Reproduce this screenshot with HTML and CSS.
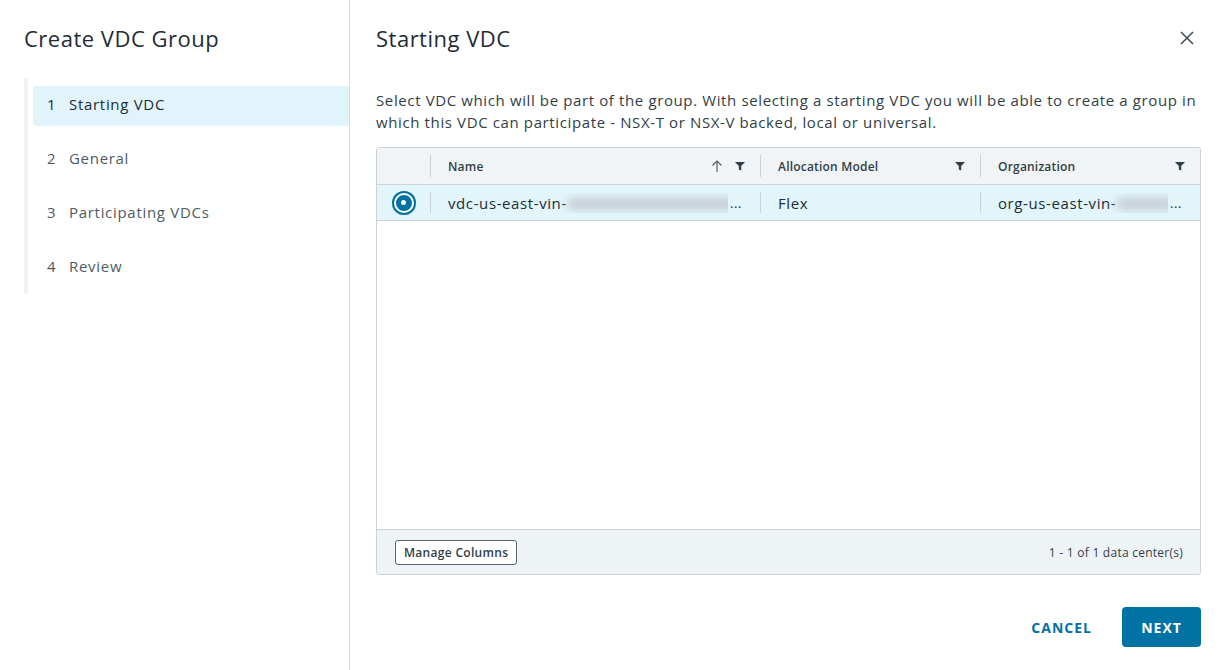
FILE: index.html
```html
<!DOCTYPE html>
<html lang="en">
  <head>
    <meta charset="UTF-8" />
    <meta name="viewport" content="width=device-width, initial-scale=1.0" />
    <title>Create VDC Group</title>
    <link rel="stylesheet" href="styles.css">
  </head>
  <body>
    <div class="wizard">
      <!-- Step list -->
      <aside class="wizard-nav">
        <h2 class="wizard-title">Create VDC Group</h2>
        <ul class="steps">
          <li class="step active"><span class="step-num">1</span>Starting VDC</li>
          <li class="step"><span class="step-num">2</span>General</li>
          <li class="step"><span class="step-num">3</span>Participating VDCs</li>
          <li class="step"><span class="step-num">4</span>Review</li>
        </ul>
      </aside>

      <!-- Current step -->
      <main class="wizard-body">
        <div class="body-head">
          <h3 class="page-title">Starting VDC</h3>
          <button class="close-btn" aria-label="Close">
            <svg width="16" height="16" viewBox="0 0 16 16">
              <path d="M2 2 L14 14 M14 2 L2 14" stroke="#3b4a54" stroke-width="1.5" fill="none" />
            </svg>
          </button>
        </div>

        <p class="intro">
          Select VDC which will be part of the group. With selecting a starting VDC you will be able to create a group in
          which this VDC can participate - NSX-T or NSX-V backed, local or universal.
        </p>

        <div class="grid">
          <div class="grid-head">
            <div class="cell cell-select"></div>
            <div class="cell cell-name">
              <span class="col-title">Name</span>
              <span class="col-icons">
                <svg class="sort-icon" width="12" height="14" viewBox="0 0 12 14">
                  <path d="M6 13 V2 M1.5 6.5 L6 2 L10.5 6.5" stroke="#56636c" stroke-width="1.2" fill="none" />
                </svg>
                <svg class="filter-icon" width="10" height="10" viewBox="0 0 10 10">
                  <path d="M0 1 H10 L6.2 5 V9.5 L3.8 8.5 V5 Z" fill="#313e46" />
                </svg>
              </span>
            </div>
            <div class="cell cell-alloc">
              <span class="col-title">Allocation Model</span>
              <span class="col-icons">
                <svg class="filter-icon" width="10" height="10" viewBox="0 0 10 10">
                  <path d="M0 1 H10 L6.2 5 V9.5 L3.8 8.5 V5 Z" fill="#313e46" />
                </svg>
              </span>
            </div>
            <div class="cell cell-org">
              <span class="col-title">Organization</span>
              <span class="col-icons">
                <svg class="filter-icon" width="10" height="10" viewBox="0 0 10 10">
                  <path d="M0 1 H10 L6.2 5 V9.5 L3.8 8.5 V5 Z" fill="#313e46" />
                </svg>
              </span>
            </div>
          </div>

          <div class="grid-rows">
            <div class="grid-row selected">
              <div class="cell cell-select">
                <span class="radio"><span class="radio-dot"></span></span>
              </div>
              <div class="cell cell-name">
                <span class="truncate">vdc-us-east-vin-<span class="redacted wide"></span></span>
                <span class="ellipsis">...</span>
              </div>
              <div class="cell cell-alloc">Flex</div>
              <div class="cell cell-org">
                <span class="truncate">org-us-east-vin-<span class="redacted short"></span></span>
                <span class="ellipsis">...</span>
              </div>
            </div>
          </div>

          <div class="grid-foot">
            <button class="btn-outline">Manage Columns</button>
            <span class="count">1 - 1 of 1 data center(s)</span>
          </div>
        </div>

        <div class="actions">
          <button class="btn-link">CANCEL</button>
          <button class="btn-primary">NEXT</button>
        </div>
      </main>
    </div>
  </body>
</html>
```

FILE: styles.css
```css
body {
  margin: 0;
  padding: 0;
  background-color: #ffffff;
  color: #313e46;
  font-family: "Open Sans", Lato, sans-serif;
}

.wizard {
  display: flex;
  height: 670px;
}

/* left column */
.wizard-nav {
  width: 350px;
  flex-shrink: 0;
  border-right: 1px solid #d7dcdf;
  padding-left: 24px;
  box-sizing: border-box;
}

.wizard-title {
  margin: 23px 0 0;
  font-size: 22px;
  font-weight: 400;
  line-height: 30px;
  letter-spacing: 0.5px;
  color: #1f2c34;
}

.steps {
  list-style: none;
  margin: 25px 0 0;
  padding: 8px 0 0 5px;
  border-left: 4px solid #eef2f5;
  height: 207px;
}

.step {
  display: flex;
  align-items: center;
  height: 40px;
  margin-bottom: 14px;
  padding: 0 0 4px 14px;
  box-sizing: border-box;
  font-size: 15px;
  letter-spacing: 0.7px;
  color: #4d5b63;
  border-radius: 4px 0 0 4px;
}

.step.active {
  background-color: #e1f4fb;
  color: #1f2c34;
}

.step-num {
  width: 22px;
}

/* right column */
.wizard-body {
  flex: 1;
  min-width: 0;
  padding: 23px 24px 0 26px;
  display: flex;
  flex-direction: column;
}

.body-head {
  display: flex;
  justify-content: space-between;
  align-items: center;
  height: 30px;
}

.page-title {
  margin: 0;
  font-size: 22px;
  font-weight: 400;
  letter-spacing: 0.5px;
  color: #1f2c34;
}

.close-btn {
  background: none;
  border: none;
  padding: 0;
  margin-right: 6px;
  display: flex;
  cursor: pointer;
}

.intro {
  margin: 36px 0 0;
  font-size: 15px;
  line-height: 22px;
  letter-spacing: 0.62px;
  color: #313e46;
}

/* datagrid */
.grid {
  margin-top: 14px;
  border: 1px solid #ccd3d8;
  border-radius: 3px;
  height: 428px;
  box-sizing: border-box;
  display: flex;
  flex-direction: column;
  overflow: hidden;
}

.grid-head,
.grid-row {
  display: flex;
}

.grid-head {
  background-color: #f1f4f6;
  border-bottom: 1px solid #ccd3d8;
  height: 37px;
  box-sizing: border-box;
  font-size: 12px;
  font-weight: 600;
  letter-spacing: 0.2px;
  color: #313e46;
}

.grid-rows {
  flex: 1;
}

.grid-row {
  height: 36px;
  box-sizing: border-box;
  border-bottom: 1px solid #ccd3d8;
  font-size: 15px;
  letter-spacing: 0.6px;
  color: #1f2c34;
}

.grid-row.selected {
  background-color: #e1f5fb;
}

.cell {
  display: flex;
  align-items: center;
  padding: 0 18px;
  box-sizing: border-box;
  position: relative;
  min-width: 0;
}

.cell + .cell::before {
  content: "";
  position: absolute;
  left: 0;
  top: 7px;
  bottom: 7px;
  border-left: 1px solid #ccd3d8;
}

.cell-select {
  width: 53px;
  justify-content: center;
  padding: 0;
}

.cell-name {
  width: 330px;
}

.cell-alloc {
  width: 220px;
}

.cell-org {
  flex: 1;
}

.col-title {
  flex: 1;
}

.col-icons {
  display: flex;
  align-items: center;
  gap: 12px;
  margin-right: -3px;
}

.truncate {
  flex: 1;
  min-width: 0;
  white-space: nowrap;
  overflow: hidden;
}

.ellipsis {
  font-size: 13px;
  margin-left: 2px;
}

.redacted {
  display: inline-block;
  height: 12px;
  vertical-align: middle;
  background-color: #c6cfd4;
  border-radius: 6px;
  filter: blur(4px);
}

.redacted.wide {
  width: 170px;
}

.redacted.short {
  width: 60px;
}

.radio {
  width: 24px;
  height: 24px;
  border-radius: 50%;
  background-color: #0072a3;
  box-shadow: inset 0 0 0 2px #0072a3, inset 0 0 0 4px #ffffff;
  display: flex;
  align-items: center;
  justify-content: center;
}

.radio-dot {
  width: 5px;
  height: 5px;
  border-radius: 50%;
  background-color: #ffffff;
}

.grid-foot {
  display: flex;
  justify-content: space-between;
  align-items: center;
  height: 45px;
  box-sizing: border-box;
  background-color: #eef3f6;
  border-top: 1px solid #ccd3d8;
  padding: 0 17px 0 18px;
}

.btn-outline {
  font-family: inherit;
  font-size: 12px;
  font-weight: 600;
  letter-spacing: 0.3px;
  color: #313e46;
  background-color: #ffffff;
  border: 1px solid #56636c;
  border-radius: 3px;
  height: 25px;
  padding: 0 8px;
}

.count {
  font-size: 12px;
  letter-spacing: 0.25px;
  color: #313e46;
}

/* footer buttons */
.actions {
  display: flex;
  justify-content: flex-end;
  align-items: center;
  gap: 24px;
  margin-top: 32px;
}

.btn-link {
  background: none;
  border: none;
  font-family: inherit;
  font-size: 14px;
  font-weight: 700;
  letter-spacing: 1px;
  color: #0072a3;
  cursor: pointer;
}

.btn-primary {
  width: 79px;
  height: 40px;
  background-color: #0072a3;
  color: #ffffff;
  border: none;
  border-radius: 4px;
  font-family: inherit;
  font-size: 14px;
  font-weight: 700;
  letter-spacing: 1px;
  cursor: pointer;
}
```
